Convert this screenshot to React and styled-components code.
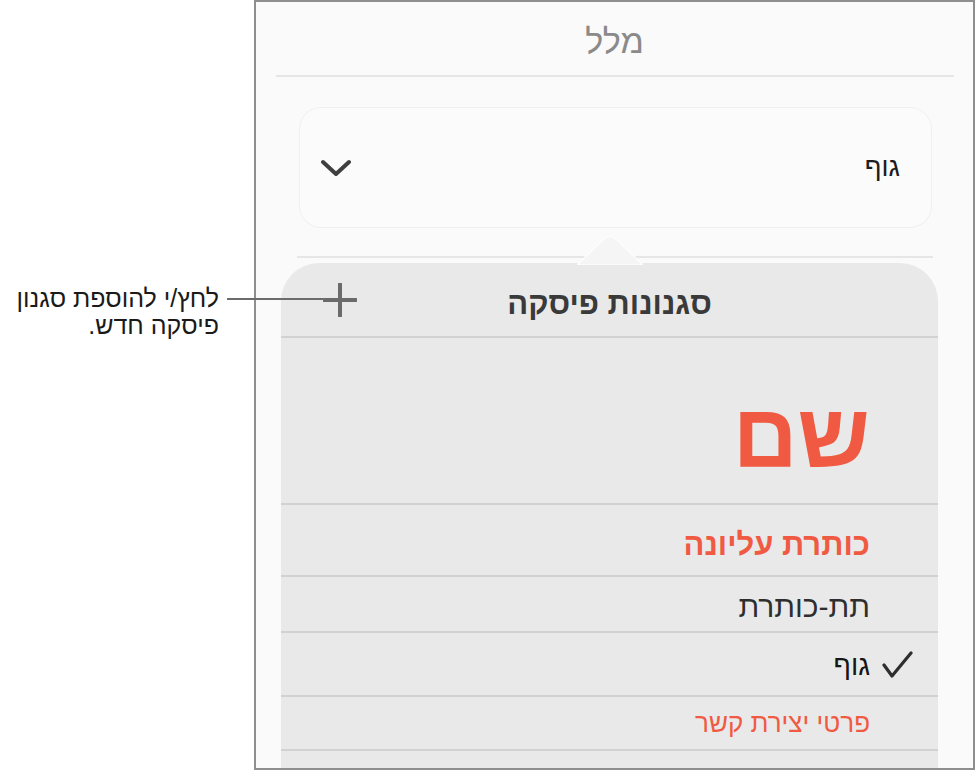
import React from 'react'
import styled, { createGlobalStyle } from 'styled-components'

const GlobalStyle = createGlobalStyle`
  html, body {
    margin: 0;
    padding: 0;
    background: #ffffff;
  }
  body {
    font-family: "Liberation Sans", Arial, sans-serif;
  }
`

const red = '#f05a42'

const Page = styled.div`
  display: flex;
  align-items: flex-start;
  width: 977px;
  height: 772px;
  position: relative;
`

const Callout = styled.div`
  width: 254px;
  flex: none;
  padding: 285px 35px 0 0;
  box-sizing: border-box;
  direction: rtl;
  text-align: right;
  font-size: 25px;
  color: #1a1a1a;
`

const CalloutLine = styled.div`
  line-height: 27px;
  white-space: nowrap;
`

// leader from the callout text to the add button
const Leader = styled.div`
  position: absolute;
  left: 227px;
  top: 298px;
  width: 96px;
  height: 2px;
  background: #6c6c6c;
  z-index: 2;
`

const Frame = styled.div`
  width: 721px;
  height: 770px;
  flex: none;
  box-sizing: border-box;
  border: 2px solid #8e8e8e;
  background: #fafafa;
  overflow: hidden;
  display: flex;
  flex-direction: column;
  direction: rtl;

  & > * {
    flex-shrink: 0;
  }
`

const Title = styled.div`
  height: 73px;
  box-sizing: border-box;
  padding-top: 5px;
  display: flex;
  align-items: center;
  justify-content: center;
  font-size: 34px;
  color: #8a8a8a;
`

const Rule = styled.div`
  height: 2px;
  background: #e6e6e6;
  margin: ${p => p.$margin};
`

const StyleCard = styled.div`
  height: 121px;
  margin: 30px 41px 0 43px;
  box-sizing: border-box;
  border: 1px solid #f0f0f0;
  border-radius: 22px;
  background: #fbfbfb;
  display: flex;
  align-items: center;
  justify-content: space-between;
  padding: 0 31px 0 21px;
  font-size: 27px;
  color: #1c1c1c;
`

const Popover = styled.div`
  flex: 1;
  margin: 5px 35px 0 25px;
  position: relative;
  background: #e9e9e9;
  border-radius: 38px 38px 0 0;
  display: flex;
  flex-direction: column;

  & > * {
    flex-shrink: 0;
  }
`

const Notch = styled.svg`
  position: absolute;
  top: -28px;
  left: 296px;
  width: 66px;
  height: 30px;
`

const Header = styled.div`
  height: 73px;
  display: grid;
  grid-template-columns: 1fr auto 1fr;
  align-items: center;
  font-size: 31px;
  font-weight: 700;
  color: #3a3a3a;
`

const HeaderTitle = styled.div`
  padding-top: 8px;
`

const AddCell = styled.div`
  display: flex;
  justify-content: flex-end;
  padding-left: 42px;
`

const Row = styled.div`
  height: ${p => p.$h}px;
  box-sizing: border-box;
  border-top: 2px solid #d2d2d2;
  display: flex;
  align-items: center;
  padding-top: ${p => p.$top || 0}px;
  padding-right: 25px;
`

const CheckSlot = styled.div`
  width: 43px;
  flex: none;
  display: flex;
  justify-content: flex-start;
  margin-top: ${p => -(p.$top || 0)}px;
`

const Sample = styled.span`
  font-size: ${p => p.$size}px;
  font-weight: ${p => (p.$bold ? 700 : 400)};
  color: ${p => p.$color};
  line-height: 1;
`

const Chevron = () => (
  <svg width="30" height="18" viewBox="0 0 30 18">
    <path d="M2 3 L15 15 L28 3" fill="none" stroke="#3f3f3f" strokeWidth="4" strokeLinecap="round" strokeLinejoin="round" />
  </svg>
)

const Plus = () => (
  <svg width="34" height="34" viewBox="0 0 34 34">
    <path d="M17 1 V33 M1 17 H33" stroke="#6a6a6a" strokeWidth="4" strokeLinecap="round" />
  </svg>
)

const Check = () => (
  <svg width="31" height="27" viewBox="0 0 31 27">
    <path d="M2 14 L10 25 L29 2" fill="none" stroke="#2e2e2e" strokeWidth="3.2" strokeLinecap="round" strokeLinejoin="round" />
  </svg>
)

const styles = [
  { name: 'שם', h: 167, top: 30, size: 90, bold: true, color: red },
  { name: 'כותרת עליונה', h: 72, top: 8, size: 31, bold: true, color: red },
  { name: 'תת-כותרת', h: 56, top: 5, size: 30, color: '#2e2e2e' },
  { name: 'גוף', h: 64, top: 4, size: 28, color: '#161616', checked: true },
  { name: 'פרטי יצירת קשר', h: 54, size: 26, color: red },
  { name: '', h: 40 },
]

export default function App() {
  return (
    <>
      <GlobalStyle />
      <Page>
        <Callout>
          <CalloutLine>לחץ/י להוספת סגנון</CalloutLine>
          <CalloutLine>פיסקה חדש.</CalloutLine>
        </Callout>
        <Leader />
        <Frame>
          <Title>מלל</Title>
          <Rule $margin="0 19px 0 20px" />
          <StyleCard>
            <span>גוף</span>
            <Chevron />
          </StyleCard>
          <Rule $margin="28px 40px 0 41px" />
          <Popover>
            <Notch viewBox="0 0 66 30">
              <path d="M0 30 L27 4 Q33 -1 39 4 L66 30 Z" fill="#f5f5f5" stroke="#fdfdfd" strokeWidth="1.5" />
            </Notch>
            <Header>
              <div />
              <HeaderTitle>סגנונות פיסקה</HeaderTitle>
              <AddCell>
                <Plus />
              </AddCell>
            </Header>
            {styles.map((s, i) => (
              <Row key={i} $h={s.h} $top={s.top}>
                <CheckSlot $top={s.top}>{s.checked && <Check />}</CheckSlot>
                <Sample $size={s.size} $bold={s.bold} $color={s.color}>{s.name}</Sample>
              </Row>
            ))}
          </Popover>
        </Frame>
      </Page>
    </>
  )
}
